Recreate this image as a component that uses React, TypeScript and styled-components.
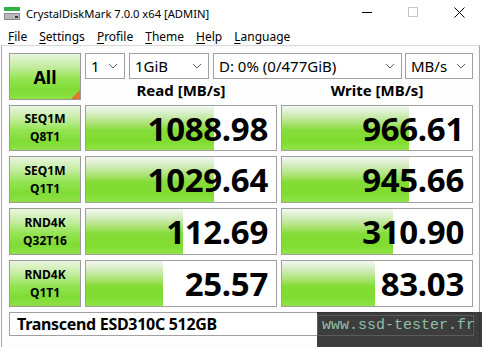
import React from 'react';
import styled, { createGlobalStyle } from 'styled-components';

type Result = {
  line1: string;
  line2: string;
  read: string;
  readFill: number;
  write: string;
  writeFill: number;
};

const results: Result[] = [
  { line1: 'SEQ1M', line2: 'Q8T1', read: '1088.98', readFill: 128, write: '966.61', writeFill: 127 },
  { line1: 'SEQ1M', line2: 'Q1T1', read: '1029.64', readFill: 128, write: '945.66', writeFill: 127 },
  { line1: 'RND4K', line2: 'Q32T16', read: '112.69', readFill: 97, write: '310.90', writeFill: 111 },
  { line1: 'RND4K', line2: 'Q1T1', read: '25.57', readFill: 77, write: '83.03', writeFill: 93 },
];

const menus = ['File', 'Settings', 'Profile', 'Theme', 'Help', 'Language'];

const GlobalStyle = createGlobalStyle`
  html, body {
    margin: 0;
    padding: 0;
    background: #ffffff;
  }
  body {
    font-family: "Noto Sans", "Open Sans", sans-serif;
    color: #000;
  }
`;

const Window = styled.div`
  position: relative;
  width: 482px;
  height: 347px;
  background: #ffffff;
  overflow: hidden;
`;

const TitleBar = styled.div`
  display: flex;
  align-items: center;
  height: 30px;
  font-size: 11.2px;
`;

const TitleText = styled.span`
  flex: 1;
  margin-left: 5px;
  margin-top: -4px;
`;

const WinButton = styled.div`
  width: 46px;
  height: 30px;
  display: flex;
  align-items: center;
  justify-content: center;
  margin-top: -6px;
`;

const MenuBar = styled.div`
  display: flex;
  height: 16px;
  align-items: center;
  font-size: 12px;
  padding-left: 8px;
  gap: 12px;
  margin-top: -2px;
`;

const MenuItem = styled.span`
  & > u {
    text-decoration: underline;
    text-underline-offset: 2px;
  }
`;

const Client = styled.div`
  margin: 1px 2px 0 1px;
  height: 298px;
  border-top: 1px solid #d8d8d8;
  border-left: 1px solid #a8a8a8;
  border-right: 1px solid #a8a8a8;
  border-bottom: 1px solid #a8a8a8;
  background: #fdfdfd;
  padding: 7px 5px 0 7px;
`;

const Grid = styled.div`
  display: grid;
  grid-template-columns: 72px 192px 192px;
  grid-template-rows: 47px 46px 47px 47px 47px 24px;
  column-gap: 4px;
  row-gap: 5px;
`;

const greenButton = `
  background: linear-gradient(to bottom, #e9f6e0 0%, #c2ec9c 30%, #94e452 55%, #7fdc34 80%, #8ee146 100%);
  border: 1px solid #9a9a9a;
  box-sizing: border-box;
`;

const AllButton = styled.div`
  ${greenButton}
  position: relative;
  display: flex;
  align-items: center;
  justify-content: center;
  font-weight: 700;
  font-size: 18px;
  overflow: hidden;

  &::after {
    content: '';
    position: absolute;
    right: 0;
    bottom: 0;
    border-style: solid;
    border-width: 0 0 9px 9px;
    border-color: transparent transparent #e2762a transparent;
  }
`;

const HeaderArea = styled.div`
  grid-column: 2 / 4;
  display: flex;
  flex-direction: column;
`;

const SelectRow = styled.div`
  display: flex;
  height: 26px;
`;

const Select = styled.div<{ $w: number; $gap: number }>`
  width: ${(p) => p.$w}px;
  margin-right: ${(p) => p.$gap}px;
  height: 26px;
  box-sizing: border-box;
  border: 1px solid #a0a0a0;
  background: #fff;
  display: flex;
  align-items: center;
  padding: 0 6px 0 5px;
  font-size: 15px;
  justify-content: space-between;
  white-space: nowrap;
`;

const ColumnTitles = styled.div`
  display: grid;
  grid-template-columns: 192px 192px;
  column-gap: 4px;
  flex: 1;
  align-items: center;
`;

const ColumnTitle = styled.div`
  text-align: center;
  font-weight: 700;
  font-size: 15px;
  padding-top: 1px;
`;

const Label = styled.div`
  ${greenButton}
  display: flex;
  flex-direction: column;
  align-items: center;
  justify-content: center;
  font-weight: 700;
  font-size: 12px;
  line-height: 18px;
`;

const Meter = styled.div`
  position: relative;
  border: 1px solid #a0a0a0;
  box-sizing: border-box;
  background: #ffffff;
  overflow: hidden;
`;

const MeterFill = styled.div`
  position: absolute;
  left: 0;
  top: 0;
  bottom: 0;
  background: linear-gradient(to bottom, #f4f8f0 0%, #d2ecbc 20%, #a6e26c 42%, #85dc38 55%, #80dc30 80%, #90e448 100%);
`;

const MeterValue = styled.div`
  position: relative;
  height: 100%;
  display: flex;
  align-items: center;
  justify-content: flex-end;
  padding-right: 8px;
  font-weight: 700;
  font-size: 33px;
  letter-spacing: -0.3px;
  line-height: 1;
`;

const Comment = styled.div`
  grid-column: 1 / 4;
  border: 1px solid #a0a0a0;
  background: #fff;
  box-sizing: border-box;
  display: flex;
  align-items: center;
  padding-left: 7px;
  font-weight: 700;
  font-size: 16px;
  letter-spacing: -0.3px;
`;

const Watermark = styled.div`
  position: absolute;
  left: 317px;
  top: 312px;
  width: 165px;
  height: 35px;
  background: rgba(40, 40, 40, 0.9);
  box-sizing: border-box;
  padding: 3px 0 0 0;
`;

const WatermarkInner = styled.div`
  width: 157px;
  height: 21px;
  border: 1px solid #5c5c5c;
  box-sizing: border-box;
  display: flex;
  align-items: center;
  padding-left: 4px;
  font-family: "Liberation Mono", "DejaVu Sans Mono", monospace;
  font-size: 15px;
  color: #90bfa8;
  white-space: nowrap;
`;

const Chevron = () => (
  <svg width="10" height="6" viewBox="0 0 10 6">
    <path d="M1 1 L5 5 L9 1" fill="none" stroke="#606060" strokeWidth="1" />
  </svg>
);

const AppIcon = () => (
  <svg width="17" height="15" viewBox="0 0 17 15" style={{ marginLeft: 4, marginTop: -4 }}>
    <rect x="0" y="1" width="16" height="4" fill="#2fb24a" />
    <rect x="0" y="7" width="16" height="7" fill="#8a8a8a" />
    <rect x="1" y="8" width="14" height="5" fill="#b8b8b8" />
    <rect x="11" y="10" width="3" height="2" fill="#3a3a3a" />
  </svg>
);

export default function App() {
  return (
    <Window>
      <GlobalStyle />
      <TitleBar>
        <AppIcon />
        <TitleText>CrystalDiskMark 7.0.0 x64 [ADMIN]</TitleText>
        <WinButton>
          <svg width="10" height="10" viewBox="0 0 10 10">
            <path d="M0 5.5 H10" stroke="#000" strokeWidth="1" />
          </svg>
        </WinButton>
        <WinButton>
          <svg width="10" height="10" viewBox="0 0 10 10">
            <rect x="0.5" y="0.5" width="9" height="9" fill="none" stroke="#c4c4c4" strokeWidth="1" />
          </svg>
        </WinButton>
        <WinButton>
          <svg width="11" height="11" viewBox="0 0 11 11">
            <path d="M0.5 0.5 L10.5 10.5 M10.5 0.5 L0.5 10.5" stroke="#000" strokeWidth="1" />
          </svg>
        </WinButton>
      </TitleBar>

      <MenuBar>
        {menus.map((m) => (
          <MenuItem key={m}>
            <u>{m[0]}</u>
            {m.slice(1)}
          </MenuItem>
        ))}
      </MenuBar>

      <Client>
        <Grid>
          <AllButton>All</AllButton>
          <HeaderArea>
            <SelectRow>
              <Select $w={40} $gap={4}>1<Chevron /></Select>
              <Select $w={80} $gap={4}>1GiB<Chevron /></Select>
              <Select $w={189} $gap={3}>D: 0% (0/477GiB)<Chevron /></Select>
              <Select $w={68} $gap={0}>MB/s<Chevron /></Select>
            </SelectRow>
            <ColumnTitles>
              <ColumnTitle>Read [MB/s]</ColumnTitle>
              <ColumnTitle>Write [MB/s]</ColumnTitle>
            </ColumnTitles>
          </HeaderArea>

          {results.map((r) => (
            <React.Fragment key={r.line1 + r.line2}>
              <Label>
                <span>{r.line1}</span>
                <span>{r.line2}</span>
              </Label>
              <Meter>
                <MeterFill style={{ width: r.readFill }} />
                <MeterValue>{r.read}</MeterValue>
              </Meter>
              <Meter>
                <MeterFill style={{ width: r.writeFill }} />
                <MeterValue>{r.write}</MeterValue>
              </Meter>
            </React.Fragment>
          ))}

          <Comment>Transcend ESD310C 512GB</Comment>
        </Grid>
      </Client>

      <Watermark>
        <WatermarkInner>www.ssd-tester.fr</WatermarkInner>
      </Watermark>
    </Window>
  );
}
